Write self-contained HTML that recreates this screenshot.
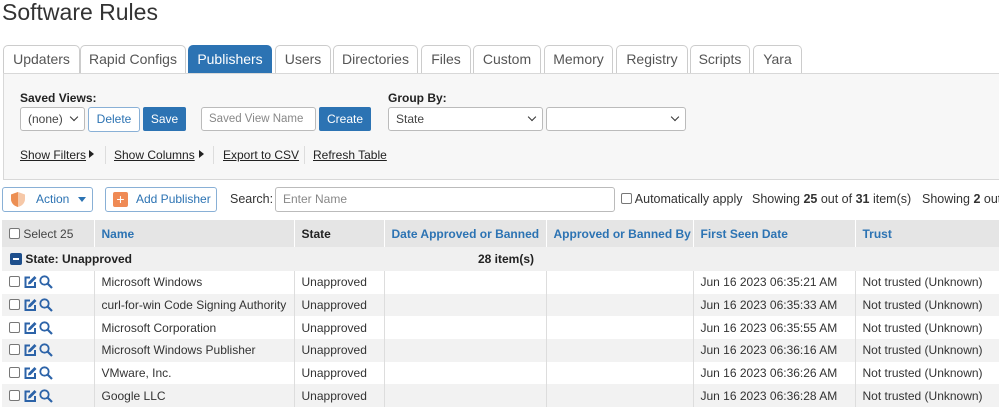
<!DOCTYPE html>
<html><head><meta charset="utf-8"><style>
*{box-sizing:border-box}
body{margin:0;width:999px;height:404px;overflow:hidden;background:#fff;font-family:"Liberation Sans",Arial,sans-serif;font-size:12.5px;color:#333;position:relative}
.a{position:absolute;white-space:nowrap}
h1{position:absolute;left:2px;top:-1px;margin:0;font-weight:normal;font-size:23px;color:#333}
.tab{position:absolute;top:45px;height:29px;border:1px solid #ccc;border-bottom:none;border-radius:5px 5px 0 0;background:#fff;color:#555;font-size:14px;text-align:center;line-height:27px}
.tab.on{background:#2c73b3;color:#fff;border-color:#2c73b3}
.panel{position:absolute;left:3px;top:73px;width:1000px;height:107px;background:#f7f7f7;border:1px solid #d8d8d8}
.lbl{font-weight:bold;font-size:12px;color:#222}
.box{position:absolute;height:24px;border:1px solid #bbb;border-radius:3px;background:#fff;font-size:12px;line-height:22px;padding-left:7px;color:#444;overflow:hidden;white-space:nowrap}
.btn{position:absolute;height:24px;border-radius:2px;background:#2c73b3;color:#fff;text-align:center;line-height:24px;font-size:12px}
.obtn{position:absolute;height:25px;border:1px solid #89b0d6;border-radius:3px;background:#fff;color:#2c73b3;line-height:23px;font-size:12px}
.lnk{text-decoration:underline;color:#222;font-size:12px}
.sep{position:absolute;top:146px;width:1px;height:18px;background:#ddd}
.chev{position:absolute;right:7px;top:6px;width:6px;height:6px;border-right:1.5px solid #333;border-bottom:1.5px solid #333;transform:rotate(45deg)}
table{position:absolute;left:2px;top:220px;border-collapse:collapse;font-size:12px;table-layout:fixed;width:997px}
td{padding:0 0 0 7px;height:22.7px;border-left:1px solid #ddd;white-space:nowrap;overflow:hidden;color:#333}
tr.h td{height:27px;background:#e5e5e5;font-weight:bold;color:#2c73b3;border-left:1px solid #fff}
tr.g td{background:#f0f0f0;height:24px;font-weight:bold;color:#222;border:none}
tr.z td{background:#f2f2f2}
.cb{display:inline-block;width:11px;height:11px;border:1px solid #777;border-radius:2px;vertical-align:-1px;background:#fff}
.ic{vertical-align:-3px}
</style></head><body>
<h1>Software Rules</h1>
<div class="tab" style="left:3px;width:77px">Updaters</div>
<div class="tab" style="left:80px;width:106px">Rapid Configs</div>
<div class="tab on" style="left:188px;width:84px">Publishers</div>
<div class="tab" style="left:275px;width:56px">Users</div>
<div class="tab" style="left:333px;width:85px">Directories</div>
<div class="tab" style="left:421px;width:50px">Files</div>
<div class="tab" style="left:473px;width:68px">Custom</div>
<div class="tab" style="left:544px;width:69px">Memory</div>
<div class="tab" style="left:616px;width:72px">Registry</div>
<div class="tab" style="left:690px;width:60px">Scripts</div>
<div class="tab" style="left:753px;width:49px">Yara</div>
<div class="panel"></div>
<div class="a lbl" style="left:20px;top:91px">Saved Views:</div>
<div class="box" style="left:20px;top:107px;width:65px">(none)<span class="chev"></span></div>
<div class="obtn" style="left:88px;top:107px;width:52px;text-align:center">Delete</div>
<div class="btn" style="left:143px;top:107px;width:43px">Save</div>
<div class="box" style="left:201px;top:107px;width:115px;color:#888;font-size:11.5px">Saved View Name</div>
<div class="btn" style="left:319px;top:107px;width:52px">Create</div>
<div class="a lbl" style="left:388px;top:91px">Group By:</div>
<div class="box" style="left:388px;top:107px;width:155px">State<span class="chev"></span></div>
<div class="box" style="left:546px;top:107px;width:140px"><span class="chev"></span></div>
<div class="a lnk" style="left:20px;top:148px">Show Filters</div><div class="a" style="left:89px;top:150px;border:4px solid transparent;border-left:5px solid #222;border-right:none"></div>
<div class="sep" style="left:105px"></div>
<div class="a lnk" style="left:114px;top:148px">Show Columns</div><div class="a" style="left:199px;top:150px;border:4px solid transparent;border-left:5px solid #222;border-right:none"></div>
<div class="sep" style="left:213px"></div>
<div class="a lnk" style="left:223px;top:148px">Export to CSV</div>
<div class="sep" style="left:304px"></div>
<div class="a lnk" style="left:313px;top:148px">Refresh Table</div>
<div class="obtn" style="left:2px;top:187px;width:91px"><svg style="position:absolute;left:7px;top:3px" width="16" height="17" viewBox="0 0 16 17"><path d="M8 1 L15 3.5 V8 C15 12 12 15 8 16 C4 15 1 12 1 8 V3.5Z" fill="#f6c8a8"/><path d="M8 1 L1 3.5 V8 C1 12 4 15 8 16Z" fill="#ec8f54"/></svg><span style="position:absolute;left:33px">Action</span><span style="position:absolute;left:75px;top:9px;border:4px solid transparent;border-top:5px solid #2c73b3"></span></div>
<div class="obtn" style="left:105px;top:187px;width:112px"><span style="position:absolute;left:7px;top:4px;width:15px;height:15px;background:#ef8a55;border-radius:2px;color:#fff;font-size:14px;line-height:14px;text-align:center">+</span><span style="position:absolute;left:30px">Add Publisher</span></div>
<div class="a" style="left:230px;top:192px;font-size:12.5px">Search:</div>
<div class="box" style="left:275px;top:187px;width:340px;height:25px;color:#888">Enter Name</div>
<div class="a" style="left:621px;top:192px"><span class="cb"></span> Automatically apply</div>
<div class="a" style="left:752px;top:192px">Showing <b>25</b> out of <b>31</b> item(s)</div>
<div class="a" style="left:922px;top:192px">Showing <b>2</b> out</div>
<svg width="0" height="0" style="position:absolute"><defs>
<symbol id="ed" viewBox="0 0 14 14"><path d="M7 2.5H2.5V12H12V7" fill="none" stroke="#2c63a8" stroke-width="2"/><path d="M5 9.5L5.5 7L11.5 1L13.5 3L7.5 9Z" fill="#2c63a8"/></symbol>
<symbol id="mg" viewBox="0 0 14 14"><circle cx="5.5" cy="5.5" r="4.2" fill="none" stroke="#2c63a8" stroke-width="1.8"/><path d="M8.5 8.5L13 13" stroke="#2c63a8" stroke-width="2.2"/></symbol>
</defs></svg>
<table>
<colgroup><col style="width:92px"><col style="width:200px"><col style="width:90px"><col style="width:162px"><col style="width:147px"><col style="width:162px"><col style="width:144px"></colgroup>
<tr class="h"><td style="font-weight:normal;color:#444;border-left:none"><span class="cb"></span> Select 25</td><td>Name</td><td style="color:#222">State</td><td>Date Approved or Banned</td><td>Approved or Banned By</td><td>First Seen Date</td><td>Trust</td></tr>
<tr class="g"><td colspan="3" style="padding-left:8px"><span style="display:inline-block;width:12px;height:12px;background:#1e4f8c;border-radius:2px;vertical-align:-2px;position:relative"><span style="position:absolute;left:3px;top:5px;width:6px;height:2px;background:#fff"></span></span> State: Unapproved</td><td colspan="4" style="padding-left:94px">28 item(s)</td></tr>
<tr><td style="border-left:none"><span class="cb"></span> <svg class="ic" width="14" height="14"><use href="#ed"/></svg><svg class="ic" width="14" height="14" style="margin-left:2px"><use href="#mg"/></svg></td><td>Microsoft Windows</td><td>Unapproved</td><td></td><td></td><td>Jun 16 2023 06:35:21 AM</td><td>Not trusted (Unknown)</td></tr>
<tr class="z"><td style="border-left:none"><span class="cb"></span> <svg class="ic" width="14" height="14"><use href="#ed"/></svg><svg class="ic" width="14" height="14" style="margin-left:2px"><use href="#mg"/></svg></td><td>curl-for-win Code Signing Authority</td><td>Unapproved</td><td></td><td></td><td>Jun 16 2023 06:35:33 AM</td><td>Not trusted (Unknown)</td></tr>
<tr><td style="border-left:none"><span class="cb"></span> <svg class="ic" width="14" height="14"><use href="#ed"/></svg><svg class="ic" width="14" height="14" style="margin-left:2px"><use href="#mg"/></svg></td><td>Microsoft Corporation</td><td>Unapproved</td><td></td><td></td><td>Jun 16 2023 06:35:55 AM</td><td>Not trusted (Unknown)</td></tr>
<tr class="z"><td style="border-left:none"><span class="cb"></span> <svg class="ic" width="14" height="14"><use href="#ed"/></svg><svg class="ic" width="14" height="14" style="margin-left:2px"><use href="#mg"/></svg></td><td>Microsoft Windows Publisher</td><td>Unapproved</td><td></td><td></td><td>Jun 16 2023 06:36:16 AM</td><td>Not trusted (Unknown)</td></tr>
<tr><td style="border-left:none"><span class="cb"></span> <svg class="ic" width="14" height="14"><use href="#ed"/></svg><svg class="ic" width="14" height="14" style="margin-left:2px"><use href="#mg"/></svg></td><td>VMware, Inc.</td><td>Unapproved</td><td></td><td></td><td>Jun 16 2023 06:36:26 AM</td><td>Not trusted (Unknown)</td></tr>
<tr class="z"><td style="border-left:none"><span class="cb"></span> <svg class="ic" width="14" height="14"><use href="#ed"/></svg><svg class="ic" width="14" height="14" style="margin-left:2px"><use href="#mg"/></svg></td><td>Google LLC</td><td>Unapproved</td><td></td><td></td><td>Jun 16 2023 06:36:28 AM</td><td>Not trusted (Unknown)</td></tr>
</table>
</body></html>
